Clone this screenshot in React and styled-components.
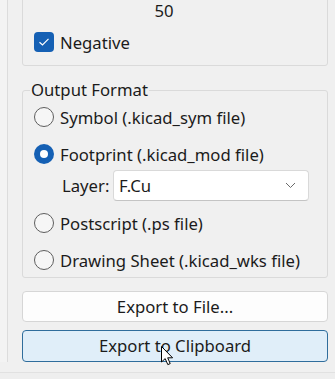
import React from 'react';
import styled, { createGlobalStyle } from 'styled-components';

const GlobalStyle = createGlobalStyle`
  html, body {
    margin: 0;
    padding: 0;
    background: #f0f0f0;
    overflow: hidden;
  }
  body {
    font-family: "Noto Sans", "Open Sans", sans-serif;
    font-size: 16.7px;
    color: #1b1b1b;
  }
`;

const Frame = styled.div`
  width: 335px;
  height: 379px;
  display: flex;
  flex-direction: column;
  overflow: hidden;
  position: relative;
`;

const Body = styled.div`
  display: flex;
  height: 362px;
`;

const Gutter = styled.div`
  width: 7px;
  background: #f3f3f3;
`;

const Panel = styled.div`
  flex: 1;
  border-left: 1px solid #dcdcdc;
  padding: 0 7px 0 14px;
  display: flex;
  flex-direction: column;
  min-width: 0;
`;

const Footer = styled.div`
  margin-top: 10px;
  flex: 1;
  border-top: 1px solid #e1e1e1;
  background: #eeeeee;
`;

const Group = styled.div`
  margin-top: -20px;
  border: 1px solid #dadada;
  border-radius: 3px;
  padding: 19px 11px 13px;
  display: flex;
  flex-direction: column;
`;

const Value = styled.div`
  line-height: 23px;
  text-align: center;
  padding-right: 22px;
  margin-top: -1px;
`;

const CheckRow = styled.label`
  margin-top: 10px;
  display: flex;
  align-items: center;
  gap: 6px;
  height: 20px;
`;

const CheckBox = styled.span`
  width: 20px;
  height: 20px;
  border-radius: 4px;
  background: #1560b4;
  display: flex;
  align-items: center;
  justify-content: center;
`;

const Fieldset = styled.fieldset`
  margin: 14px 0 0;
  border: 1px solid #dadada;
  border-radius: 3px;
  padding: 5px 11px 5px;
  min-width: 0;
  display: flex;
  flex-direction: column;
`;

const Legend = styled.legend`
  padding: 0 1px;
  margin-left: -4px;
  line-height: 20px;
`;

const RadioRow = styled.label`
  display: flex;
  align-items: center;
  gap: 6px;
  height: 24px;
  margin-top: ${(p) => p.$gap}px;
  white-space: nowrap;
`;

const RadioDot = styled.span`
  box-sizing: border-box;
  width: 20px;
  height: 20px;
  border-radius: 50%;
  flex: none;
  border: ${(p) => (p.$on ? 'none' : '1px solid #5e5e5e')};
  background: ${(p) => (p.$on ? '#1560b4' : '#f6f6f6')};
  display: flex;
  align-items: center;
  justify-content: center;

  &::after {
    content: '';
    display: ${(p) => (p.$on ? 'block' : 'none')};
    width: 8px;
    height: 8px;
    border-radius: 50%;
    background: #ffffff;
  }
`;

const LayerRow = styled.div`
  display: flex;
  align-items: center;
  height: 31px;
  margin-top: 4px;
  padding-left: 28px;
`;

const LayerLabel = styled.span`
  width: 51px;
`;

const Select = styled.div`
  box-sizing: border-box;
  width: 196px;
  height: 31px;
  background: #ffffff;
  border: 1px solid #d9d9d9;
  border-bottom-color: #c4c4c4;
  border-radius: 4px;
  display: flex;
  align-items: center;
  justify-content: space-between;
  padding: 0 12px 0 5px;
`;

const Buttons = styled.div`
  margin-top: 13px;
  display: flex;
  flex-direction: column;
  gap: 8px;
`;

const Button = styled.button`
  box-sizing: border-box;
  height: ${(p) => (p.$hover ? 32 : 31)}px;
  font: inherit;
  color: #1b1b1b;
  border-radius: 4px;
  border: 1px solid ${(p) => (p.$hover ? '#2f6d9c' : '#d6d6d6')};
  background: ${(p) => (p.$hover ? '#e0eef9' : '#fdfdfd')};
  padding: 0;
  line-height: 20px;
`;

const Cursor = styled.svg`
  position: absolute;
  left: 161px;
  top: 346px;
`;

const Radio = ({ on, gap, children }) => (
  <RadioRow $gap={gap}>
    <RadioDot $on={on} />
    <span>{children}</span>
  </RadioRow>
);

export default function App() {
  return (
    <>
      <GlobalStyle />
      <Frame>
        <Body>
          <Gutter />
          <Panel>
            <Group>
              <Value>50</Value>
              <CheckRow>
                <CheckBox>
                  <svg width="12" height="10" viewBox="0 0 12 10">
                    <path d="M1.5 5.2 L4.5 8 L10.5 1.8" fill="none" stroke="#fff" strokeWidth="1.2" />
                  </svg>
                </CheckBox>
                <span>Negative</span>
              </CheckRow>
            </Group>

            <Fieldset>
              <Legend>Output Format</Legend>
              <Radio gap={0}>Symbol (.kicad_sym file)</Radio>
              <Radio on gap={13}>Footprint (.kicad_mod file)</Radio>
              <LayerRow>
                <LayerLabel>Layer:</LayerLabel>
                <Select>
                  <span>F.Cu</span>
                  <svg width="11" height="7" viewBox="0 0 11 7">
                    <path d="M1 1 L5.5 5.5 L10 1" fill="none" stroke="#6a6a6a" strokeWidth="1" />
                  </svg>
                </Select>
              </LayerRow>
              <Radio gap={10}>Postscript (.ps file)</Radio>
              <Radio gap={13}>Drawing Sheet (.kicad_wks file)</Radio>
            </Fieldset>

            <Buttons>
              <Button>Export to File...</Button>
              <Button $hover>Export to Clipboard</Button>
            </Buttons>
          </Panel>
        </Body>
        <Footer />
        <Cursor width="13" height="20" viewBox="0 0 13 20">
          <path d="M0.5 0.5 L0.5 16 L4.2 12.6 L6.8 18.6 L9.2 17.6 L6.7 11.8 L11.6 11.8 Z" fill="#fff" stroke="#000" strokeWidth="1" strokeLinejoin="round" />
        </Cursor>
      </Frame>
    </>
  );
}
